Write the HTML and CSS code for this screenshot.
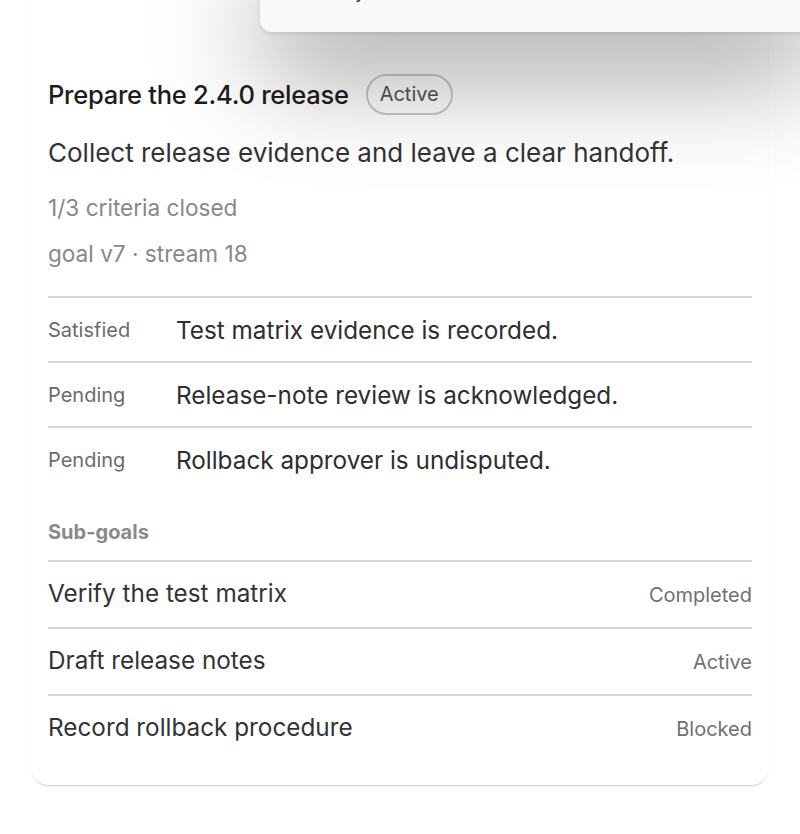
FILE: index.html
```html
<!DOCTYPE html>
<html lang="en">
<head>
    <meta charset="UTF-8">
    <meta name="viewport" content="width=device-width, initial-scale=1.0">
    <title>Prepare the 2.4.0 release</title>
    <link rel="stylesheet" href="styles.css">
</head>
<body>
    <div class="page">
        <!-- Goal card -->
        <div class="goal-card">
            <div class="goal-header">
                <h1>Prepare the 2.4.0 release</h1>
                <span class="status-pill">Active</span>
            </div>
            <p class="goal-desc">Collect release evidence and leave a clear handoff.</p>
            <p class="goal-meta">1/3 criteria closed</p>
            <p class="goal-meta meta-last">goal v7 · stream 18</p>

            <!-- Criteria -->
            <div class="criteria-list">
                <div class="criteria-row">
                    <span class="criteria-state">Satisfied</span>
                    <span class="criteria-text">Test matrix evidence is recorded.</span>
                </div>
                <div class="criteria-row">
                    <span class="criteria-state">Pending</span>
                    <span class="criteria-text">Release-note review is acknowledged.</span>
                </div>
                <div class="criteria-row">
                    <span class="criteria-state">Pending</span>
                    <span class="criteria-text">Rollback approver is undisputed.</span>
                </div>
            </div>

            <!-- Sub-goals -->
            <h2 class="section-title">Sub-goals</h2>
            <div class="subgoal-list">
                <div class="subgoal-row">
                    <span class="subgoal-name">Verify the test matrix</span>
                    <span class="subgoal-status">Completed</span>
                </div>
                <div class="subgoal-row">
                    <span class="subgoal-name">Draft release notes</span>
                    <span class="subgoal-status">Active</span>
                </div>
                <div class="subgoal-row">
                    <span class="subgoal-name">Record rollback procedure</span>
                    <span class="subgoal-status">Blocked</span>
                </div>
            </div>
        </div>

        <!-- Popover lying over the card -->
        <div class="popover">
            <span class="popover-text">Summary</span>
        </div>
    </div>
</body>
</html>
```

FILE: styles.css
```css
html, body {
    margin: 0;
    padding: 0;
    background-color: #fff;
    overflow: hidden;
}

body {
    font-family: Inter, "Noto Sans", sans-serif;
    color: #333;
}

.page {
    position: relative;
    display: flow-root;
    height: 834px;
}

.goal-card {
    margin: -40px 32px 0;
    padding: 114px 16px 24px;
    background-color: #fff;
    border-radius: 16px;
    box-shadow: 0 2px 2px -1px rgba(0,0,0,0.22);
}

.goal-header {
    display: flex;
    align-items: center;
    gap: 17px;
}

.goal-header h1 {
    margin: 0;
    font-size: 25.5px;
    font-weight: 500;
    letter-spacing: -0.01em;
    color: #1d1d1d;
    line-height: 30px;
}

.status-pill {
    display: inline-block;
    padding: 7px 12px;
    border: 2px solid #c9c9c9;
    border-radius: 999px;
    font-size: 20px;
    line-height: 23px;
    color: #555;
}

.goal-desc {
    margin: 20px 0 0;
    font-size: 26px;
    line-height: 36px;
    color: #333;
}

.goal-meta {
    margin: 21px 0 0;
    font-size: 22.6px;
    line-height: 32px;
    color: #888;
}

.goal-meta.meta-last {
    margin-top: 14px;
}

.criteria-list {
    margin-top: 26px;
}

.criteria-row {
    display: flex;
    align-items: flex-start;
    border-top: 2px solid #d6d6d6;
    padding: 14px 0 13px;
}

.criteria-state {
    width: 128px;
    flex-shrink: 0;
    font-size: 20px;
    line-height: 36px;
    color: #6b6b6b;
}

.criteria-text {
    font-size: 24.3px;
    line-height: 36px;
    color: #2e2e2e;
}

.section-title {
    margin: 26px 0 0;
    font-size: 20px;
    font-weight: 700;
    line-height: 30px;
    color: #8a8a8a;
}

.subgoal-list {
    margin-top: 13px;
}

.subgoal-row {
    display: flex;
    justify-content: space-between;
    align-items: baseline;
    border-top: 2px solid #d6d6d6;
    padding: 13px 0 14px;
}

.subgoal-name {
    font-size: 24.3px;
    line-height: 36px;
    color: #333;
}

.subgoal-status {
    font-size: 20px;
    line-height: 36px;
    color: #707070;
}

.popover {
    position: absolute;
    top: -40px;
    left: 260px;
    right: -20px;
    height: 72px;
    box-sizing: border-box;
    padding: 20px 24px 0;
    background-color: #f9f9f7;
    border-radius: 12px;
    box-shadow: 0 36px 110px rgba(0,0,0,0.45), 0 2px 4px rgba(0,0,0,0.1);
}

.popover-text {
    font-size: 18px;
    line-height: 24px;
    color: #333;
}
```
